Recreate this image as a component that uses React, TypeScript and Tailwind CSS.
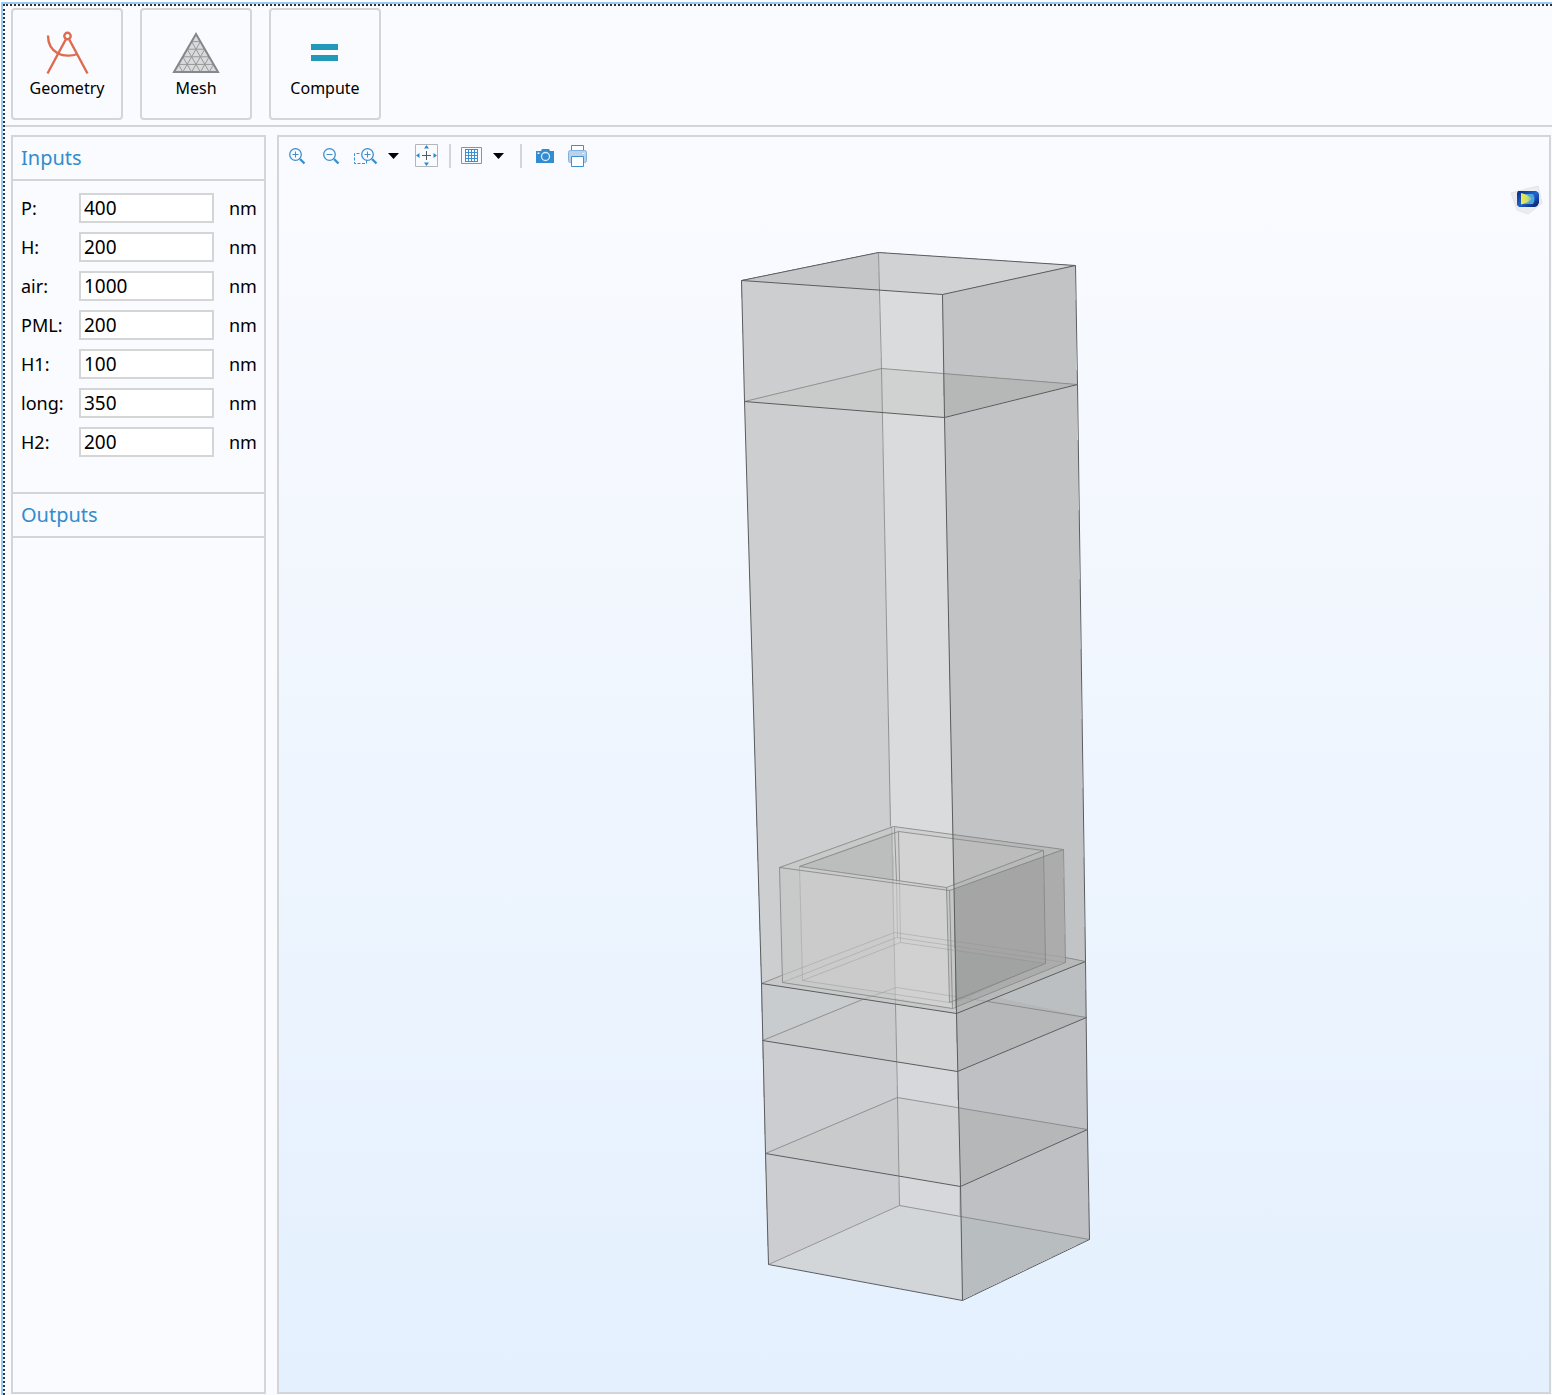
import type { ReactNode } from "react";

const inputs = [
  { name: "P", value: "400" },
  { name: "H", value: "200" },
  { name: "air", value: "1000" },
  { name: "PML", value: "200" },
  { name: "H1", value: "100" },
  { name: "long", value: "350" },
  { name: "H2", value: "200" },
];

// Translucent faces, painted back to front
const faces = [
  // outer column
  { fill: "#cdced0", points: "741,280 879,290 895,1004 761,983" },
  { fill: "#d9dbdd", points: "879,290 942,294 956,1013 895,1004" },
  { fill: "#c2c3c5", points: "942,294 1075,265 1085,961 956,1013" },
  { fill: "#c5c6c8", points: "741,280 878,252 879,290" },
  { fill: "#d1d2d3", points: "878,252 1075,265 942,294 879,290" },
  // air / PML interface
  { fill: "#c9cbca", points: "744,401 881,368 882,412" },
  { fill: "#d0d1d1", points: "881,368 943,373 944,417 882,412" },
  { fill: "#b6b8b7", points: "943,373 1077,384 944,417" },
  // substrate layers
  { fill: "#c8cccf", points: "761,983 895,1004 896,1061 762,1040" },
  { fill: "#d1d2d3", points: "895,1004 956,1013 957,1071 896,1061" },
  { fill: "#bbbfc1", points: "956,1013 1085,961 1086,1017 957,1071" },
  { fill: "#cccdd0", points: "762,1040 896,1061 899,1205 768,1264" },
  { fill: "#d7d8dc", points: "896,1061 957,1071 961,1216 899,1205" },
  { fill: "#bfc0c4", points: "957,1071 1086,1017 1089,1239 961,1300" },
  { fill: "#c9cacb", points: "762,1040 862,998 895,1004 896,1061" },
  { fill: "#b6b7b9", points: "956,1013 996,997 1086,1017 957,1071" },
  { fill: "#c9cacb", points: "765,1153 897,1097 898,1175" },
  { fill: "#d0d1d2", points: "897,1097 959,1108 960,1186 898,1175" },
  { fill: "#b6b7b9", points: "959,1108 1087,1129 960,1186" },
  { fill: "#d3d6d8", points: "768,1264 899,1205 961,1216 962,1300" },
  { fill: "#b8bdbf", points: "961,1216 1089,1239 962,1300" },
  // ring on top of the substrate
  { fill: "#c8c9c9", points: "761,983 781,976 782,982 952,1008 955,1008 956,1013" },
  { fill: "#b7b8b8", points: "956,1013 955,1006 1065,962 1065,957 1085,961" },
  { fill: "#c8c9c9", points: "779,867 893,826 949,890 952,1008 782,982" },
  { fill: "#d0d0d0", points: "893,826 953,834 953,889 894,880" },
  { fill: "#b8b9b9", points: "953,834 1063,849 954,889" },
  { fill: "#acacac", points: "954,889 1063,849 1065,962 955,1007" },
  { fill: "#bbbebc", points: "799,866 893,832 894,880" },
  { fill: "#d3d3d4", points: "898,831 953,838 953,885 946,887 898,880" },
  { fill: "#bcbcbc", points: "953,838 1043,850 953,884" },
  { fill: "#cbcbcb", points: "799,866 894,880 895,994 802,980" },
  { fill: "#d1d1d1", points: "894,880 949,890 952,1008 895,998" },
  { fill: "#a5a5a5", points: "954,889 1043,857 1045,963 955,1003" },
  { fill: "#a0a3a1", points: "955,949 1045,963 955,1003" },
  { fill: "#c5c7c6", points: "946,887 954,890 955,1008 950,1002" },
];

const hiddenEdges = [
  "878,252 881,368 890,826",
  "895,1004 897,1097 899,1205",
  "744,401 881,368 1077,384",
  "762,1040 862,999",
  "987,1001 1086,1017",
  "765,1153 897,1097 1087,1129",
  "768,1264 899,1205 1089,1239",
  "779,867 893,826 1063,849 949,890 779,867",
  "799,866 898,831 1043,850 946,887 799,866",
  "779,867 782,982 952,1008 1065,962 1063,849",
  "949,890 952,1008",
  "1043,850 1045,963 949,1002",
  "946,887 949,1002",
  "894,827 896,880",
  "898,831 899,880",
  "761,983 781,975",
  "1065,957 1085,961",
];

const faintEdges = [
  "781,975 894,932 1065,957",
  "782,982 896,937 1065,962",
  "799,866 802,980 900,942 1045,963",
  "802,980 949,1002",
  "891,826 895,1004",
  "896,880 897,937",
  "899,880 900,942",
  "862,999 896,987 987,1001",
];

const visibleEdges = [
  "741,280 878,252 1075,265 942,294 741,280",
  "741,280 744,401 761,983 765,1153 768,1264 962,1300 1089,1239 1087,1129 1085,961 1077,384 1075,265",
  "942,294 944,417 956,1013 960,1186 962,1300",
  "744,401 944,417 1077,384",
  "761,983 956,1013 1085,961",
  "762,1040 957,1071 1086,1017",
  "765,1153 960,1186 1087,1129",
];

function GeometryIcon() {
  return (
    <svg width="44" height="46" viewBox="0 0 44 46" fill="none" stroke="#df6b4f" strokeWidth="2.400">
      <circle cx="22.500" cy="6" r="3.200" />
      <path d="M21 9 2.500 43.500M24 9l18.500 34.500" />
      <path d="M3 5.500c0 10 4.500 15 10 18 5.500 2.800 14 2.800 19.500.5" />
    </svg>
  );
}

function MeshIcon() {
  return (
    <svg width="48" height="42" viewBox="0 0 48 42" fill="none" stroke="#96989a">
      <path d="M24 2 46 40H2Z" fill="#d9dadb" />
      <path d="M19.600 9.600h8.800M15.200 17.200h17.600M10.800 24.800h26.400M6.400 32.400h35.200" />
      <path d="M19.600 9.600 37.200 40M15.200 17.200 28.400 40M10.800 24.800 19.600 40M6.400 32.400 10.800 40" />
      <path d="M28.400 9.600 10.800 40M32.800 17.200 19.600 40M37.200 24.800 28.400 40M41.600 32.400 37.200 40" />
      <path d="M24 2 46 40H2Z" strokeWidth="2" stroke="#85878a" />
    </svg>
  );
}

function ComputeIcon() {
  return (
    <svg width="28" height="18" viewBox="0 0 28 18" fill="#2199b8">
      <path d="M0 0h27v6H0zM0 11h27v6H0z" />
    </svg>
  );
}

function ZoomIcon({ plus }: { plus?: boolean }) {
  return (
    <svg width="18" height="18" viewBox="0 0 18 18" fill="none" stroke="#3a91d0">
      <circle cx="7.500" cy="7.500" r="5.800" strokeWidth="1.300" />
      <path d="M12 12l4.500 4.500" strokeWidth="2.400" />
      <path d={plus ? "M4.500 7.500h6M7.500 4.500v6" : "M4.500 7.500h6"} />
    </svg>
  );
}

function ZoomBoxIcon() {
  return (
    <svg width="24" height="18" viewBox="0 0 24 18" fill="none" stroke="#3a91d0">
      <path d="M5.500 6.500h-5v10h12v-3" strokeDasharray="3 1.500" />
      <circle cx="13.500" cy="7.500" r="5.800" strokeWidth="1.300" />
      <path d="M18 12l4.500 4.500" strokeWidth="2.400" />
      <path d="M10.500 7.500h6M13.500 4.500v6" />
    </svg>
  );
}

function Caret() {
  return (
    <svg width="11" height="6" viewBox="0 0 11 6">
      <path d="M0 0h11L5.500 6z" />
    </svg>
  );
}

function ExtentsIcon() {
  return (
    <svg width="24" height="24" viewBox="0 0 24 24" fill="none">
      <path d="M.5 .5h22v22H.5z" stroke="#b4b5b7" />
      <path d="M7 11.500h9M11.500 7v9" stroke="#55585b" />
      <path d="M11.500 1l2.500 3.500H9zM11.500 22l2.500-3.500H9zM1 11.500 4.500 9v5zM22 11.500 18.500 9v5z" fill="#2d8acb" />
    </svg>
  );
}

function GridIcon() {
  return (
    <svg width="22" height="18" viewBox="0 0 22 18" fill="none">
      <path d="M.5 .5h20v16H.5z" stroke="#8f9194" />
      <path d="M4.500 2v13M7.500 2v13M10.500 2v13M13.500 2v13M16.500 2v13M4 2.500h13M4 5.500h13M4 8.500h13M4 11.500h13M4 14.500h13" stroke="#3a91d0" />
    </svg>
  );
}

function CameraIcon() {
  return (
    <svg width="18" height="16" viewBox="0 0 18 16">
      <path d="M0 3h5l1-2h7l1 2h4v12H0z" fill="#338ccf" />
      <circle cx="9.500" cy="8.500" r="4" fill="none" stroke="#d5e9f8" strokeWidth="1.300" />
      <path d="M1.500 4.500h2v1.500h-2z" fill="#fff" />
    </svg>
  );
}

function PrinterIcon() {
  return (
    <svg width="20" height="24" viewBox="0 0 20 24" stroke="#3a91d0">
      <path d="M3.500 8V1.500h12V8" fill="#fff" />
      <rect x=".5" y="6.500" width="18" height="12" rx="2" fill="#bcd2ea" stroke="#7fb1dd" />
      <path d="M3.500 12.500h12v10h-12z" fill="#fff" />
      <path d="M14.500 9.500h2" stroke="#fff" />
    </svg>
  );
}

function SceneLogo() {
  return (
    <svg width="34" height="32" viewBox="0 0 34 32">
      <defs>
        <linearGradient id="cube" x1="0" x2="1" y1="0" y2="1">
          <stop offset="0" stopColor="#0b2a80" />
          <stop offset=".5" stopColor="#1e63cf" />
          <stop offset="1" stopColor="#071a66" />
        </linearGradient>
        <linearGradient id="glow" x1="0" x2="1">
          <stop offset="0" stopColor="#f4ee3d" />
          <stop offset=".6" stopColor="#c9dc72" />
          <stop offset="1" stopColor="#5cb4d8" />
        </linearGradient>
      </defs>
      <path d="M2 9 29 2l4 17-14 11-11-4z" fill="#ededf0" stroke="#e4e4e8" />
      <path d="M9 7h18q3 1 3 4v8q-1 3-4 4H10l-2-2V9z" fill="url(#cube)" />
      <path d="M12 10h12q3 5 0 10H12z" fill="#4aa6dc" />
      <path d="M12 9q8 2 11 6-4 4-11 5.500z" fill="url(#glow)" />
    </svg>
  );
}

function RibbonButton({ label, children }: { label: string; children: ReactNode }) {
  return (
    <button className="flex size-28 flex-col items-center rounded-[4px] border-2 border-[#d4d5d6] pt-[18px]">
      <span className="flex h-[50px] items-center justify-center">{children}</span>
      <span className="text-[16px] leading-[20px]">{label}</span>
    </button>
  );
}

function ToolButton({ label, className, children }: { label: string; className?: string; children: ReactNode }) {
  return (
    <button aria-label={label} className={className}>
      {children}
    </button>
  );
}

function SectionTitle({ children }: { children: ReactNode }) {
  return (
    <h2 className="border-b-2 border-[#d4d5d6] px-2 py-[7px] text-[20px] leading-[28px] text-[#338ccd]">
      {children}
    </h2>
  );
}

export default function App() {
  return (
    <div className="flex min-h-screen bg-white pt-[2px] pl-px font-['Noto_Sans',sans-serif] text-black">
      <div className="flex flex-1 border-t-2 border-l-2 border-[#98cbf8]">
        <div className="flex flex-1 flex-col border-t-2 border-l-2 border-dotted border-[#333] bg-[#fafbff]">
          {/* Ribbon */}
          <header className="flex gap-[17px] border-b-2 border-[#d4d5d6] px-[6px] pt-[2px] pb-[5px]">
            <RibbonButton label="Geometry">
              <GeometryIcon />
            </RibbonButton>
            <RibbonButton label="Mesh">
              <MeshIcon />
            </RibbonButton>
            <RibbonButton label="Compute">
              <ComputeIcon />
            </RibbonButton>
          </header>

          <div className="flex flex-1 gap-[11px] pt-2 pr-px pb-px pl-[6px]">
            {/* Parameters */}
            <aside className="w-[255px] shrink-0 border-2 border-[#d4d5d6]">
              <SectionTitle>Inputs</SectionTitle>
              <div className="flex flex-col gap-[9px] border-b-2 border-[#d4d5d6] px-2 pt-3 pb-[35px] text-[18px]">
                {inputs.map((item) => (
                  <div key={item.name} className="flex h-[30px] items-center">
                    <label htmlFor={item.name} className="w-[58px] shrink-0">
                      {item.name}:
                    </label>
                    <input
                      id={item.name}
                      defaultValue={item.value}
                      className="h-[30px] w-[135px] border-2 border-[#d4d5d6] bg-white px-[3px] text-[19px] leading-[24px] outline-none"
                    />
                    <span className="pl-[15px]">nm</span>
                  </div>
                ))}
              </div>
              <SectionTitle>Outputs</SectionTitle>
            </aside>

            {/* Graphics */}
            <main className="min-w-0 flex-1 border-2 border-[#d4d5d6] bg-linear-to-b from-[#fafbff] to-[#e4f0fe]">
              <div className="flex h-[38px] items-center gap-[10px] pl-[9px]">
                <ToolButton label="Zoom in" className="mr-[6px]">
                  <ZoomIcon plus />
                </ToolButton>
                <ToolButton label="Zoom out" className="mr-1">
                  <ZoomIcon />
                </ToolButton>
                <ToolButton label="Zoom box">
                  <ZoomBoxIcon />
                </ToolButton>
                <ToolButton label="Zoom options" className="mr-[6px]">
                  <Caret />
                </ToolButton>
                <ToolButton label="Zoom extents">
                  <ExtentsIcon />
                </ToolButton>
                <div className="h-6 w-[2px] bg-[#d4d5d6]" />
                <ToolButton label="Show grid">
                  <GridIcon />
                </ToolButton>
                <ToolButton label="Grid options" className="mr-[6px]">
                  <Caret />
                </ToolButton>
                <div className="mr-1 h-6 w-[2px] bg-[#d4d5d6]" />
                <ToolButton label="Image snapshot" className="mr-1">
                  <CameraIcon />
                </ToolButton>
                <ToolButton label="Print">
                  <PrinterIcon />
                </ToolButton>
              </div>

              <div className="flex justify-end pt-[9px] pr-[6px]">
                <SceneLogo />
              </div>

              <svg
                role="img"
                aria-label="Unit cell geometry"
                width="352"
                height="1052"
                viewBox="738 250 352 1052"
                className="mx-auto mt-[34px] max-w-full"
              >
                {faces.map((face) => (
                  <polygon key={face.points} points={face.points} fill={face.fill} shapeRendering="crispEdges" />
                ))}
                <g fill="none" transform="translate(.5 .5)">
                  {faintEdges.map((points) => (
                    <polyline key={points} points={points} stroke="#909292" strokeOpacity=".4" />
                  ))}
                  {hiddenEdges.map((points) => (
                    <polyline key={points} points={points} stroke="#7c7e7f" strokeOpacity=".75" />
                  ))}
                  {visibleEdges.map((points) => (
                    <polyline key={points} points={points} stroke="#5a5c5e" />
                  ))}
                </g>
              </svg>
            </main>
          </div>
        </div>
      </div>
    </div>
  );
}
